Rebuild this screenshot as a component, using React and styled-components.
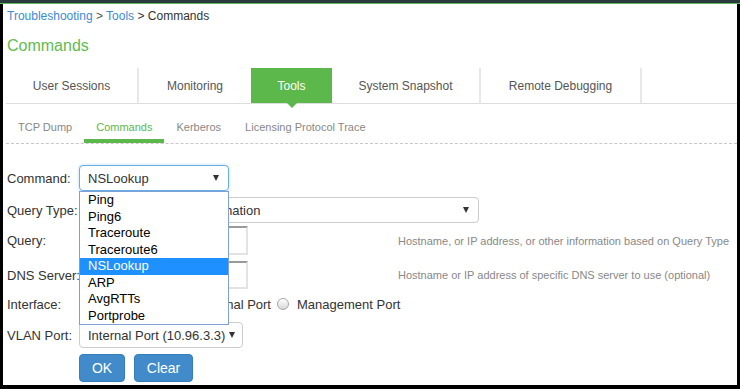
import React from 'react';
import styled, { createGlobalStyle } from 'styled-components';

const GlobalStyle = createGlobalStyle`
  html, body {
    margin: 0;
    padding: 0;
    background: #000;
  }
  body {
    font-family: "Liberation Sans", Arial, sans-serif;
  }
`;

const Frame = styled.div`
  width: 740px;
  height: 389px;
  background: #000;
  display: flex;
  flex-direction: column;
  overflow: hidden;
`;

const TopBar = styled.div`
  flex: none;
  height: 3px;
  background: #2c3a3f;
  border-bottom: 1px solid #5cb85c;
`;

const Page = styled.div`
  flex: 1;
  min-height: 0;
  margin: 0 3px 4px 3px;
  padding-top: 4px;
  background: #fff;
`;

const Crumbs = styled.div`
  padding-left: 4px;
  font-size: 12px;
  line-height: 16px;
  color: #333;
`;

const Crumb = styled.a`
  color: #3b8bd4;
  text-decoration: none;
`;

const Sep = styled.span`
  color: #555;
`;

const Title = styled.h1`
  margin: 12px 0 0;
  padding-left: 4px;
  font-size: 16px;
  line-height: 20px;
  font-weight: normal;
  color: #62bb4e;
`;

const Tabs = styled.div`
  display: flex;
  height: 35px;
  margin: 12px 0 0 3px;
  border-bottom: 1px solid #ddd;
`;

const Tab = styled.div`
  position: relative;
  display: flex;
  align-items: center;
  justify-content: center;
  flex: none;
  width: ${p => p.$w}px;
  font-size: 12px;
  white-space: nowrap;
  color: ${p => (p.$active ? '#fff' : '#555')};
  background: ${p => (p.$active ? '#5cb84a' : 'transparent')};
  border-right: ${p => (p.$sep ? '2px solid #e8e8e8' : 'none')};

  &::after {
    content: '';
    display: ${p => (p.$active ? 'block' : 'none')};
    position: absolute;
    top: 100%;
    left: 50%;
    transform: translateX(-50%);
    border-left: 5px solid transparent;
    border-right: 5px solid transparent;
    border-top: 5px solid #5cb84a;
  }
`;

const SubTabs = styled.div`
  display: flex;
  margin-left: 3px;
  border-bottom: 1px dashed #c8c8c8;
`;

const SubTab = styled.div`
  padding: 16px 12px 5px;
  font-size: 11px;
  line-height: 14px;
  white-space: nowrap;
  color: ${p => (p.$active ? '#5cb84a' : '#888')};
  border-bottom: 4px solid ${p => (p.$active ? '#5cb84a' : 'transparent')};
`;

const Form = styled.div`
  padding: 21px 0 0 4px;
`;

const Row = styled.div`
  display: flex;
  align-items: center;
  height: ${p => p.$h}px;
  margin-top: ${p => p.$mt || 0}px;
`;

const Label = styled.div`
  flex: none;
  width: 72px;
  font-size: 13px;
  color: #333;
  white-space: nowrap;
`;

const SelectWrap = styled.div`
  position: relative;
`;

const Select = styled.div`
  display: flex;
  align-items: center;
  justify-content: space-between;
  box-sizing: border-box;
  width: ${p => p.$w}px;
  height: 26px;
  padding: 0 9px 0 8px;
  border: 1px solid ${p => (p.$focus ? '#66afe9' : '#ccc')};
  border-radius: 4px;
  box-shadow: ${p => (p.$focus ? '0 0 3px rgba(102, 175, 233, 0.5)' : 'none')};
  font-size: 13px;
  color: #333;
  white-space: nowrap;
  background: #fff;
`;

const Caret = styled.span`
  flex: none;
  width: 0;
  height: 0;
  margin-left: 4px;
  border-left: 3.5px solid transparent;
  border-right: 3.5px solid transparent;
  border-top: 6px solid #333;
`;

const List = styled.ul`
  position: absolute;
  z-index: 10;
  top: 100%;
  left: 0;
  width: 150px;
  box-sizing: border-box;
  margin: 0;
  padding: 0;
  list-style: none;
  background: #fff;
  border: 1px solid #7f9fd6;
`;

const Option = styled.li`
  height: 16.5px;
  line-height: 16.5px;
  padding-left: 8px;
  font-size: 13px;
  color: ${p => (p.$selected ? '#fff' : '#000')};
  background: ${p => (p.$selected ? '#1e90ff' : 'transparent')};
`;

const Input = styled.div`
  flex: none;
  box-sizing: border-box;
  width: 169px;
  height: ${p => p.$h}px;
  border-style: solid;
  border-width: 2px;
  border-color: #9a9a9a #e3e3e3 #e3e3e3 #9a9a9a;
`;

const Hint = styled.div`
  margin-left: 150px;
  font-size: 11px;
  color: #888;
  white-space: nowrap;
`;

const RadioOption = styled.label`
  display: flex;
  align-items: center;
  margin-right: 6px;
  font-size: 13px;
  color: #333;
  white-space: nowrap;
`;

const RadioDot = styled.span`
  flex: none;
  width: 12px;
  height: 12px;
  box-sizing: border-box;
  margin-right: 8px;
  border: 1px solid #a6a6a6;
  border-radius: 50%;
  background: linear-gradient(#fff, #d8d8d8);
`;

const Buttons = styled.div`
  display: flex;
  gap: 9px;
  height: 100%;
  padding-left: 72px;
`;

const Button = styled.button`
  width: ${p => p.$w}px;
  height: 28px;
  padding: 0;
  border: 1px solid #357ebd;
  border-radius: 4px;
  background: #428bca;
  color: #fff;
  font-family: inherit;
  font-size: 14px;
`;

const tabs = [
  { label: 'User Sessions', w: 131, sep: true },
  { label: 'Monitoring', w: 112 },
  { label: 'Tools', w: 81, active: true },
  { label: 'System Snapshot', w: 147, sep: true },
  { label: 'Remote Debugging', w: 159, sep: true },
];

const subTabs = ['TCP Dump', 'Commands', 'Kerberos', 'Licensing Protocol Trace'];

const commands = ['Ping', 'Ping6', 'Traceroute', 'Traceroute6', 'NSLookup', 'ARP', 'AvgRTTs', 'Portprobe'];

const ports = ['Internal Port', 'External Port', 'Management Port'];

export default function App() {
  return (
    <Frame>
      <GlobalStyle />
      <TopBar />
      <Page>
        <Crumbs>
          <Crumb>Troubleshooting</Crumb> <Sep>&gt;</Sep> <Crumb>Tools</Crumb> &gt; Commands
        </Crumbs>
        <Title>Commands</Title>

        <Tabs>
          {tabs.map(t => (
            <Tab key={t.label} $w={t.w} $active={t.active} $sep={t.sep}>
              {t.label}
            </Tab>
          ))}
        </Tabs>

        <SubTabs>
          {subTabs.map(s => (
            <SubTab key={s} $active={s === 'Commands'}>
              {s}
            </SubTab>
          ))}
        </SubTabs>

        <Form>
          <Row $h={26}>
            <Label>Command:</Label>
            <SelectWrap>
              <Select $w={150} $focus>
                NSLookup
                <Caret />
              </Select>
              <List>
                {commands.map(c => (
                  <Option key={c} $selected={c === 'NSLookup'}>
                    {c}
                  </Option>
                ))}
              </List>
            </SelectWrap>
          </Row>

          <Row $h={26} $mt={6}>
            <Label>Query Type:</Label>
            <Select $w={400}>
              ANY - Request All Information
              <Caret />
            </Select>
          </Row>

          <Row $h={29} $mt={3}>
            <Label>Query:</Label>
            <Input $h={29} />
            <Hint>Hostname, or IP address, or other information based on Query Type</Hint>
          </Row>

          <Row $h={28} $mt={6}>
            <Label>DNS Server:</Label>
            <Input $h={28} />
            <Hint>Hostname or IP address of specific DNS server to use (optional)</Hint>
          </Row>

          <Row $h={24} $mt={3}>
            <Label>Interface:</Label>
            {ports.map(p => (
              <RadioOption key={p}>
                <RadioDot />
                {p}
              </RadioOption>
            ))}
          </Row>

          <Row $h={26} $mt={6}>
            <Label>VLAN Port:</Label>
            <Select $w={164}>
              Internal Port (10.96.3.3)
              <Caret />
            </Select>
          </Row>

          <Row $h={28} $mt={6}>
            <Buttons>
              <Button $w={46}>OK</Button>
              <Button $w={59}>Clear</Button>
            </Buttons>
          </Row>
        </Form>
      </Page>
    </Frame>
  );
}
